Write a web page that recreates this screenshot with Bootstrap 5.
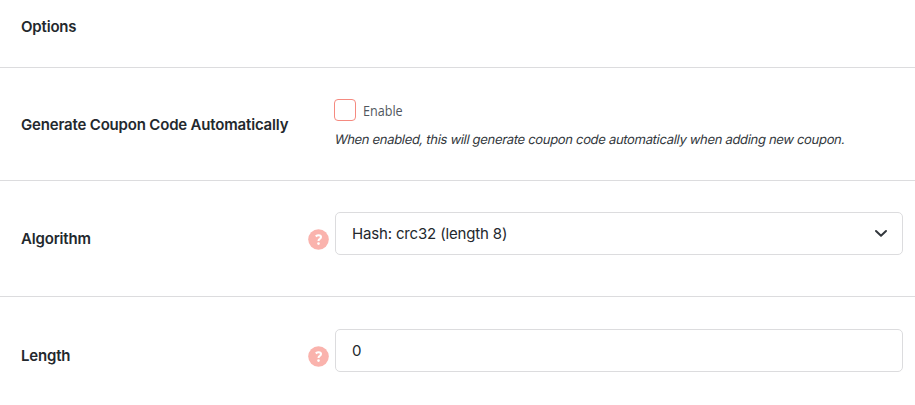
<!DOCTYPE html>
<html lang="en">
<head>
<meta charset="utf-8">
<meta name="viewport" content="width=device-width, initial-scale=1">
<title>Options</title>
<link href="https://cdn.jsdelivr.net/npm/bootstrap@5.3.0/dist/css/bootstrap.min.css" rel="stylesheet">
<style>
body { font-family: Inter, sans-serif; color: #23282d; font-size: 15px; overflow: hidden; height: 405px; }
.opt-row { border-bottom: 1px solid #dcdcde; padding-left: 21px; padding-right: 12px; }
.opt-title { height: 68px; padding-bottom: 15px; }
.opt-check { height: 113px; }
.opt-field { height: 116px; }
.opt-field.last-field { height: 117px; border-bottom: 0; }
.opt-label { width: 314px; font-weight: 600; font-size: 15px; letter-spacing: -.18px; line-height: 20px; padding-top: 1px; padding-right: 6px; }
.help-dot { width: 21px; height: 21px; }
.form-control.opt-input, .form-select.opt-input { height: 43px; border: 1px solid #dcdcde; border-radius: 5px; padding: 0 16px; font-size: 15px; letter-spacing: -.16px; color: #23282d; margin-bottom: 10px; background-color: #fff; }
.form-select.opt-input { padding-top: 2px; background-image: url("data:image/svg+xml,%3csvg xmlns='http://www.w3.org/2000/svg' viewBox='0 0 14 9'%3e%3cpath d='M2 2l5 4.7L12 2' fill='none' stroke='%2332373c' stroke-width='2' stroke-linecap='round' stroke-linejoin='round'/%3e%3c/svg%3e"); background-size: 14px 9px; background-position: right 14px center; }
.check-group { padding-bottom: 2px; }
.form-check-input.opt-box { width: 22px; height: 22px; border: 1px solid #f58a80; border-radius: 4px; margin: 0 7px 0 -1px; }
.enable-text { font-family: "Open Sans", sans-serif; font-size: 14px; color: #50575e; line-height: 22px; padding-top: 2px; transform: scaleX(.9); transform-origin: left center; }
.opt-note { font-size: 13px; letter-spacing: -.31px; line-height: 18px; margin-top: 8px; color: #32373c; transform: skewX(-12deg); white-space: nowrap; }
</style>
</head>
<body class="bg-white">
<form>
  <div class="opt-row opt-title d-flex align-items-center"><div class="opt-label">Options</div></div>
  <div class="opt-row opt-check d-flex align-items-center">
    <div class="opt-label flex-shrink-0">Generate Coupon Code Automatically</div>
    <div class="check-group">
      <div class="d-flex align-items-center">
        <input class="form-check-input opt-box" type="checkbox" id="auto"><label class="enable-text" for="auto">Enable</label>
      </div>
      <div class="opt-note">When enabled, this will generate coupon code automatically when adding new coupon.</div>
    </div>
  </div>
  <div class="opt-row opt-field d-flex align-items-center">
    <div class="opt-label flex-shrink-0 d-flex align-items-center justify-content-between"><label for="algo">Algorithm</label>
      <svg class="help-dot" viewBox="0 0 21 21"><circle cx="10.5" cy="10.5" r="10.3" fill="#fab3ad"/><path d="M7.7 7.3Q9.2 6.2 10.7 6.2Q13 6.2 13 8.1Q13 9.2 11.8 9.9Q10.5 10.6 10.5 11.9" fill="none" stroke="#fff" stroke-width="2.1"/><circle cx="10.5" cy="14.6" r="1.3" fill="#fff"/></svg>
    </div>
    <select class="form-select opt-input" id="algo"><option>Hash: crc32 (length 8)</option></select>
  </div>
  <div class="opt-row opt-field last-field d-flex align-items-center">
    <div class="opt-label flex-shrink-0 d-flex align-items-center justify-content-between"><label for="len">Length</label>
      <svg class="help-dot" viewBox="0 0 21 21"><circle cx="10.5" cy="10.5" r="10.3" fill="#fab3ad"/><path d="M7.7 7.3Q9.2 6.2 10.7 6.2Q13 6.2 13 8.1Q13 9.2 11.8 9.9Q10.5 10.6 10.5 11.9" fill="none" stroke="#fff" stroke-width="2.1"/><circle cx="10.5" cy="14.6" r="1.3" fill="#fff"/></svg>
    </div>
    <input class="form-control opt-input" id="len" type="text" value="0">
  </div>
</form>
<script src="https://cdn.jsdelivr.net/npm/bootstrap@5.3.0/dist/js/bootstrap.bundle.min.js"></script>
</body>
</html>
